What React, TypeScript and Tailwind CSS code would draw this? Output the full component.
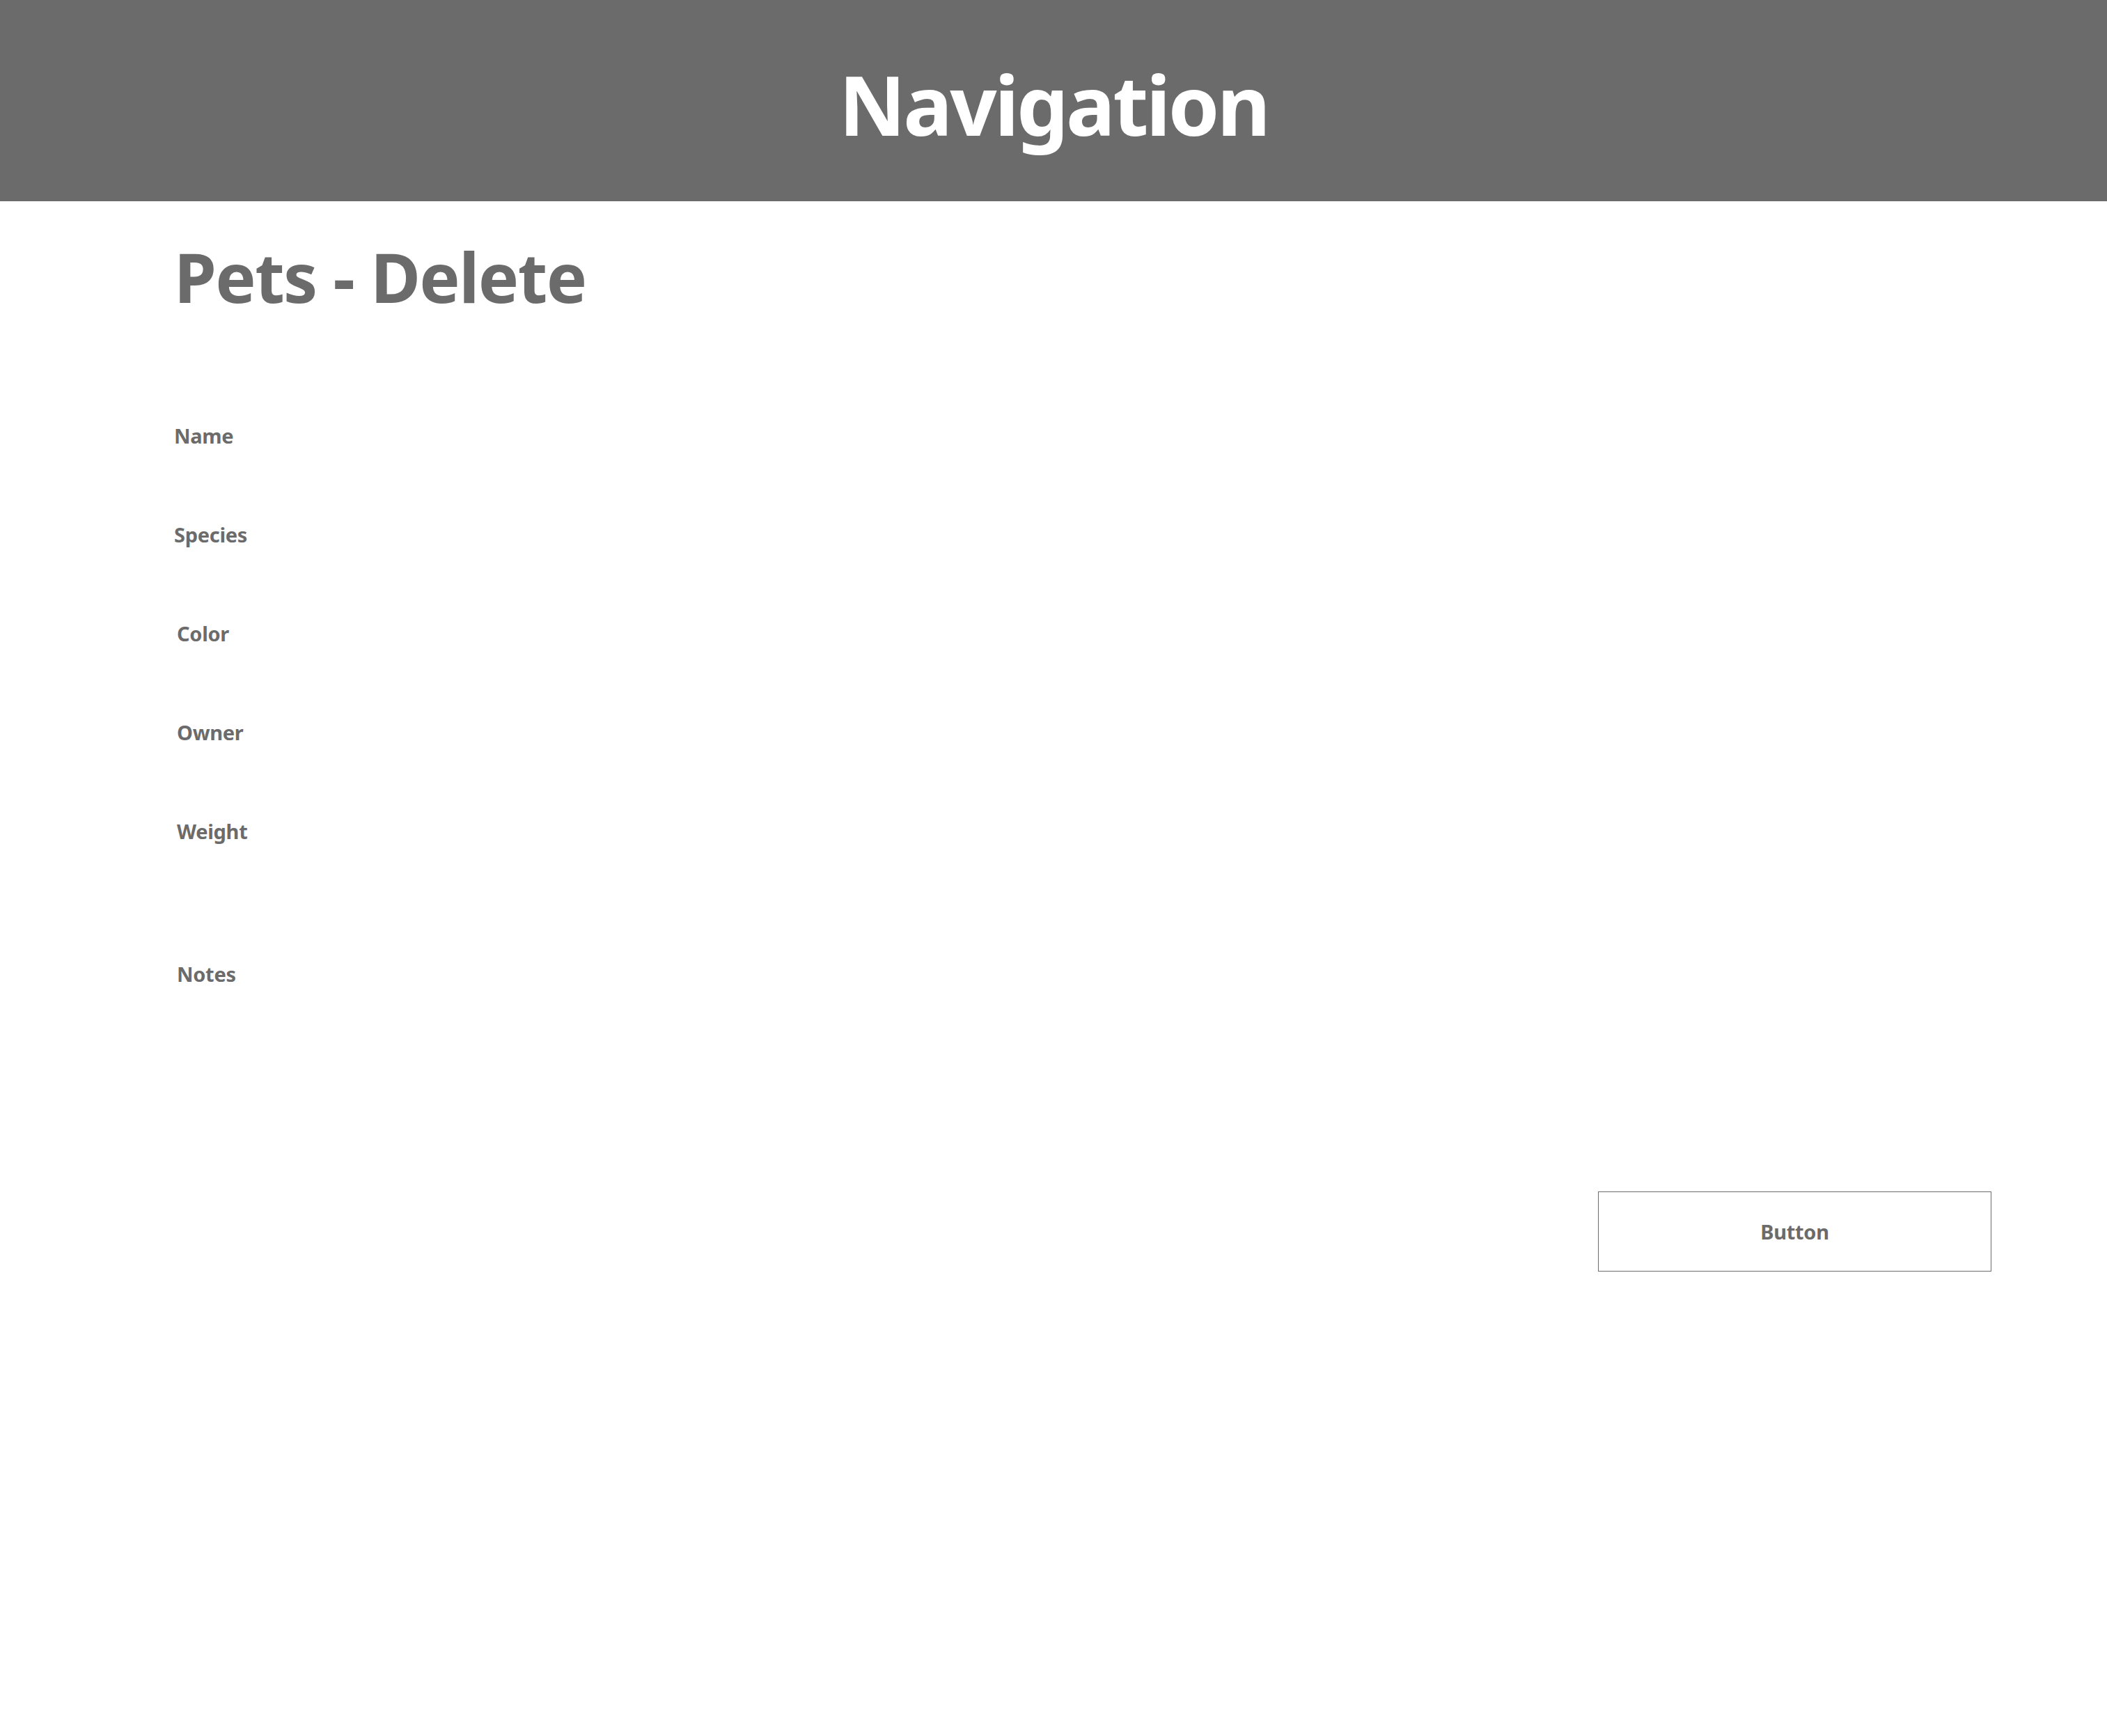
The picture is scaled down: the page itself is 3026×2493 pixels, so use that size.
import React from "react";

const fields = ["Name", "Species", "Color", "Owner", "Weight"];

const App = () => {
  return (
    <div className="min-h-screen w-full bg-white font-['Noto_Sans',sans-serif] text-[#6b6b6b]">
      <div className="flex h-[289px] w-full justify-center bg-[#6b6b6b] pt-[91px]">
        <div className="text-[118px] font-bold leading-none tracking-[-3.5px] text-white">
          Navigation
        </div>
      </div>
      <div className="flex flex-col pl-[250px] pr-[166px]">
        <div className="mt-[59px] text-[98px] font-bold leading-none tracking-[-1.6px]">
          Pets - Delete
        </div>
        <div className="mt-[165px] flex flex-col gap-[113px]">
          {fields.map((f, i) => (
            <div
              key={f}
              className={
                i < 2
                  ? "text-[29px] font-bold leading-none tracking-[-0.3px]"
                  : "pl-[4px] text-[29px] font-bold leading-none tracking-[-0.3px]"
              }
            >
              {f}
            </div>
          ))}
        </div>
        <div className="mt-[176px] pl-[4px] text-[29px] font-bold leading-none tracking-[-0.3px]">
          Notes
        </div>
        <div className="mt-[298px] flex justify-end">
          <button className="flex h-[115px] w-[565px] items-center justify-center border border-[#6b6b6b] bg-white text-[29px] font-bold tracking-[-0.3px] text-[#6b6b6b]">
            Button
          </button>
        </div>
      </div>
    </div>
  );
};

export default App;
